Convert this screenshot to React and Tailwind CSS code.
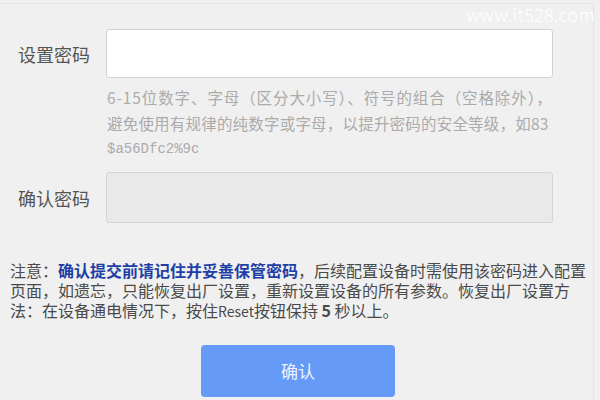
export default function App() {
  const font = { fontFamily: '"Noto Sans CJK SC", "Noto Sans", sans-serif' };
  return (
    <div
      className="relative w-[600px] h-[400px] overflow-hidden bg-[#f0f0f0]"
      style={font}
    >
      <div className="absolute top-[3px] left-0 w-[594px] h-[397px] border-t border-r border-[#e4e4e4]" />
      <div className="absolute top-[2px] right-[5px] text-[18px] leading-[24px] text-white tracking-[0.3px] font-light">
        www.it528.com
      </div>

      <div className="relative flex flex-col pt-[29px]">
        <div className="flex items-center">
          <div className="w-[106px] pl-[18px] text-[18px] leading-[24px] text-[#555]">设置密码</div>
          <div className="w-[447px] h-[49px] bg-white border border-[#d2d2d2] rounded-[3px]" />
        </div>

        <div className="pl-[107px] mt-[6px] text-[15.5px] leading-[26px] text-[#ababab] whitespace-nowrap">
          <div className="tracking-[0.9px]">6-15位数字、字母（区分大小写）、符号的组合（空格除外），</div>
          <div className="tracking-[0.2px]">避免使用有规律的纯数字或字母，以提升密码的安全等级，如83</div>
          <div className="text-[14px]" style={{ fontFamily: '"Liberation Mono", monospace' }}>$a56Dfc2%9c</div>
        </div>

        <div className="flex items-center mt-[10px]">
          <div className="w-[106px] pl-[18px] text-[18px] leading-[24px] text-[#555]">确认密码</div>
          <div className="w-[447px] h-[51px] bg-[#e9e9e9] border border-[#d4d4d4] rounded-[3px]" />
        </div>

        <div className="pl-[10px] mt-[37px] text-[16px] leading-[20px] text-[#4a4a4a] whitespace-nowrap">
          <div>
            注意：<span className="text-[#1e3fa6] font-bold">确认提交前请记住并妥善保管密码</span>，后续配置设备时需使用该密码进入配置
          </div>
          <div>页面，如遗忘，只能恢复出厂设置，重新设置设备的所有参数。恢复出厂设置方</div>
          <div>
            法：在设备通电情况下，按住<span className="text-[14px]">Reset</span>按钮保持 <span className="font-bold">5</span> 秒以上。
          </div>
        </div>

        <div className="mt-[24px] ml-[201px] w-[194px] h-[52px] rounded-[4px] bg-[#659af6] flex items-center justify-center text-[17px] text-[#eef4ff]">
          确认
        </div>
      </div>
    </div>
  );
}
